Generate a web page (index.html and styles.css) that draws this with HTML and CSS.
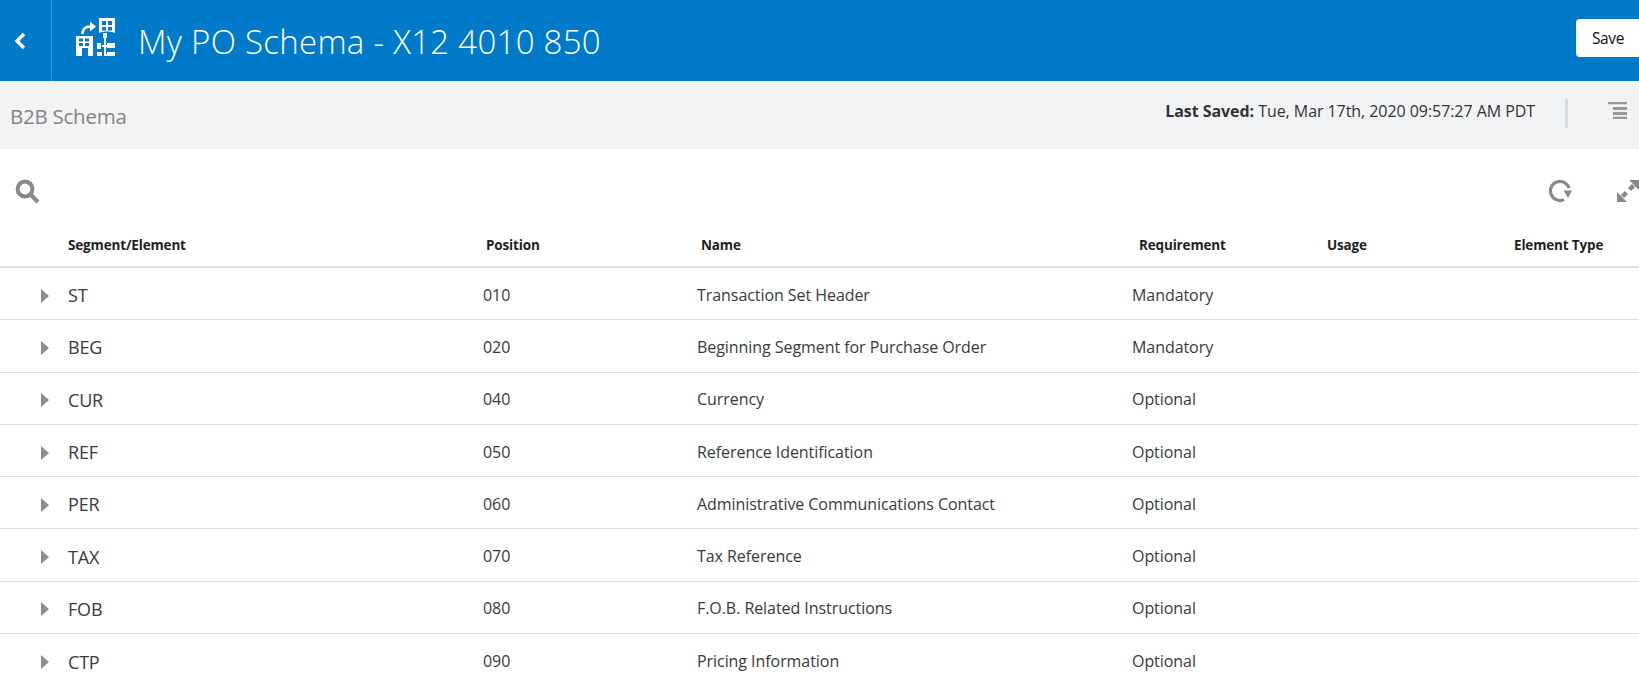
FILE: index.html
```html
<!DOCTYPE html>
<html lang="en">
<head>
<meta charset="utf-8">
<title>My PO Schema - X12 4010 850</title>
<link rel="stylesheet" href="styles.css">
</head>
<body>
<header class="topbar">
  <button class="back" aria-label="Back">
    <svg width="12" height="18" viewBox="0 0 12 18"><path d="M10 2 3 9l7 7" fill="none" stroke="#fff" stroke-width="3.400"/></svg>
  </button>
  <svg class="logo" width="40" height="39" viewBox="0 0 40 39" fill="#fff">
    <path fill-rule="evenodd" d="M0 18h17v20h-5v-8H6v8H0zM3 20.500v3h4v-3zM9 20.500v3h4v-3zM3 25v3h4v-3zM9 25v3h4v-3z"/>
    <path fill-rule="evenodd" d="M23 0h16v15c-5-2-11-2-16 0zM26 3v4h4V3zM32 3v4h4V3zM26 9v3.500h4V9zM32 9v3.500h4V9z"/>
    <path d="M6.500 16c0-5 3-7.500 8-7.500" fill="none" stroke="#fff" stroke-width="2.600"/>
    <path d="M14 3.500 20 8.500l-6 5z"/>
    <path d="M27 15h4v5h-1v7h5v2h-5v7h5v2h-7v-9h-2v-2h2v-7h-1z"/>
    <path d="M21 25h4v6h-4zM31 25h8v5h-8zM21 34h5v4h-5zM31 34h8v4h-8z"/>
  </svg>
  <h1 class="title">My PO Schema - X12 4010 850</h1>
  <button class="save">Save</button>
</header>

<section class="subbar">
  <span class="subtitle">B2B Schema</span>
  <span class="saved"><b>Last Saved:</b> Tue, Mar 17th, 2020 09:57:27 AM PDT</span>
  <span class="divider"></span>
  <svg class="menu" width="19" height="17" viewBox="0 0 19 17" fill="#999">
    <path d="M0 0h19v2.200H0zM5 5h14v3H5zM5 10h14v3H5zM5 14.800h14V17H5z"/>
  </svg>
</section>

<section class="toolbar">
  <svg width="25" height="25" viewBox="0 0 25 25" fill="none" stroke="#85898c">
    <circle cx="10" cy="10" r="7.400" stroke-width="4"/>
    <path d="m15.500 15.500 7.500 7.500" stroke-width="4"/>
  </svg>
  <span class="toolbar-right">
    <svg width="24" height="23" viewBox="0 0 24 23" fill="none" stroke="#85898c">
      <path d="M16 19.600A9.500 9.500 0 1 1 21 8" stroke-width="3.200"/>
      <path d="M15.500 10.500H24l-4 7.500z" fill="#85898c" stroke="none"/>
    </svg>
    <svg width="22" height="22" viewBox="0 0 22 22" fill="#85898c" stroke="none">
      <path d="M12 0h10v10zM10 22H0V12z"/>
      <path d="m16.500 5.500-4 4" stroke="#85898c" stroke-width="4.500"/>
      <path d="m5.500 16.500 4-4" stroke="#85898c" stroke-width="4.500"/>
    </svg>
  </span>
</section>

<div class="grid">
  <div class="row head">
    <div class="seg">Segment/Element</div>
    <div class="pos">Position</div>
    <div class="nam">Name</div>
    <div class="req">Requirement</div>
    <div class="usa">Usage</div>
    <div class="typ">Element Type</div>
  </div>
  <div class="row"><div class="seg"><i class="tri"></i>ST</div><div class="pos">010</div><div class="nam">Transaction Set Header</div><div class="req">Mandatory</div><div></div><div></div></div>
  <div class="row"><div class="seg"><i class="tri"></i>BEG</div><div class="pos">020</div><div class="nam">Beginning Segment for Purchase Order</div><div class="req">Mandatory</div><div></div><div></div></div>
  <div class="row"><div class="seg"><i class="tri"></i>CUR</div><div class="pos">040</div><div class="nam">Currency</div><div class="req">Optional</div><div></div><div></div></div>
  <div class="row"><div class="seg"><i class="tri"></i>REF</div><div class="pos">050</div><div class="nam">Reference Identification</div><div class="req">Optional</div><div></div><div></div></div>
  <div class="row"><div class="seg"><i class="tri"></i>PER</div><div class="pos">060</div><div class="nam">Administrative Communications Contact</div><div class="req">Optional</div><div></div><div></div></div>
  <div class="row"><div class="seg"><i class="tri"></i>TAX</div><div class="pos">070</div><div class="nam">Tax Reference</div><div class="req">Optional</div><div></div><div></div></div>
  <div class="row"><div class="seg"><i class="tri"></i>FOB</div><div class="pos">080</div><div class="nam">F.O.B. Related Instructions</div><div class="req">Optional</div><div></div><div></div></div>
  <div class="row"><div class="seg"><i class="tri"></i>CTP</div><div class="pos">090</div><div class="nam">Pricing Information</div><div class="req">Optional</div><div></div><div></div></div>
</div>
</body>
</html>
```
FILE: styles.css
```css
* { box-sizing: border-box; }
html, body { margin: 0; height: 687px; overflow: hidden; }
body { font-family: "Open Sans", "Noto Sans", sans-serif; color: #333; background: #fff; }

.topbar { display: flex; align-items: center; height: 81px; background: #007ac9; }
.back { width: 52px; height: 81px; padding: 0 0 0 14px; background: none; border: 0; border-right: 1px solid #3b97d4; display: flex; align-items: center; justify-content: flex-start; }
.logo { margin: 0 0 6px 24px; flex: none; }
.title { margin: 2px 0 0 22px; font-size: 33px; font-weight: 300; color: #fff; letter-spacing: .28px; white-space: nowrap; }
.save { margin: 0 0 5px auto; width: 63px; height: 38px; background: #fff; border: 0; border-radius: 4px 0 0 4px; font: 15.500px "Open Sans", sans-serif; color: #111; text-align: left; padding: 0 0 0 16px; letter-spacing: -.4px; }

.subbar { display: flex; align-items: center; height: 68px; padding: 0 12px 0 10px; background: #f2f3f5; }
.subtitle { margin-top: 2px; font-size: 20.500px; color: #848484; letter-spacing: -.25px; }
.saved { margin: 0 0 8px auto; font-size: 16px; color: #333; letter-spacing: -.06px; }
.saved b { font-weight: 700; }
.divider { width: 3px; height: 30px; margin: 0 40px 4px 30px; background: #d6dde4; }
.menu { margin-bottom: 9px; }

.toolbar { display: flex; align-items: flex-start; justify-content: space-between; height: 68px; padding: 30px 0 0 15px; }
.toolbar-right { display: flex; align-items: flex-start; gap: 45px; margin-top: 1px; }

.row { display: grid; grid-template-columns: 483px 214px 435px 195px 187px 125px; align-items: center; height: 52.300px; padding-top: 2px; border-bottom: 1px solid #e0e0e0; font-size: 16px; letter-spacing: -.06px; color: #3a3a3a; }
.row:last-child { border-bottom: 0; }
.row.head { height: 51px; padding-top: 6px; border-bottom: 2px solid #e0e0e0; font-size: 13.500px; font-weight: 700; color: #1f1f1f; letter-spacing: -.16px; }
.seg { position: relative; padding: 1px 0 0 68px; font-size: 18px; letter-spacing: -.2px; }
.head .seg { padding-top: 0; font-size: 13.500px; letter-spacing: -.16px; }
.head .pos { padding-left: 3px; }
.head .nam { padding-left: 4px; }
.head .req { padding-left: 7px; }
.tri { position: absolute; left: 41px; top: 50%; margin-top: -6px; border-left: 8px solid #8a8e96; border-top: 7px solid transparent; border-bottom: 7px solid transparent; }
```
